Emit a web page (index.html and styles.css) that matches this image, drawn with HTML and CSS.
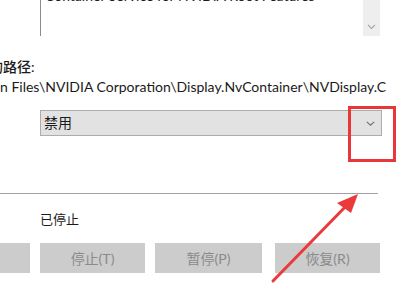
FILE: index.html
```html
<!DOCTYPE html>
<html>
<head>
<meta charset="utf-8">
<link rel="stylesheet" href="styles.css">
</head>
<body>
<div class="page">
  <div class="desc">
    <div class="desc-text">Container Service for NVIDIA Root Features</div>
    <div class="scrollbar">
      <svg class="sb-chev" width="9" height="6" viewBox="0 0 9 6"><path d="M1 1 L4.5 4.5 L8 1" fill="none" stroke="#a8a8a8" stroke-width="1.2"/></svg>
    </div>
  </div>
  <div class="label">的路径:</div>
  <div class="path">n Files\NVIDIA Corporation\Display.NvContainer\NVDisplay.Container.exe</div>
  <div class="combo">
    <span class="combo-text">禁用</span>
    <svg class="combo-chev" width="9" height="5" viewBox="0 0 9 5"><path d="M0.8 0.8 L4.5 4.2 L8.2 0.8" fill="none" stroke="#707070" stroke-width="1.1"/></svg>
  </div>
  <div class="sep"></div>
  <div class="status">已停止</div>
  <div class="buttons">
    <div class="btn">启动(S)</div>
    <div class="btn">停止(T)</div>
    <div class="btn btn-wide">暂停(P)</div>
    <div class="btn btn-last">恢复(R)</div>
  </div>
  <div class="highlight"></div>
  <svg class="arrow" width="400" height="300" viewBox="0 0 400 300">
    <path d="M273 281 L349 203" stroke="#ea3a3a" stroke-width="3" stroke-linecap="round"/>
    <path d="M358 194 L337 203 L351 213 Z" fill="#ea3a3a"/>
  </svg>
</div>
</body>
</html>
```

FILE: styles.css
```css
html, body {
  margin: 0;
  padding: 0;
  background: #ffffff;
  overflow: hidden;
}
body {
  width: 400px;
  height: 300px;
  font-family: "Lato", "Noto Sans CJK SC", sans-serif;
  color: #1a1a1a;
}
.page {
  position: relative;
  width: 400px;
  height: 300px;
}
.desc {
  display: flex;
  margin-left: 40px;
  width: 340px;
  height: 36px;
  border-left: 1px solid #8c8c8c;
  box-sizing: border-box;
}
.desc-text {
  flex: 1;
  font-size: 14px;
  line-height: 14px;
  margin-top: -11px;
  padding-left: 4px;
  white-space: nowrap;
  overflow: hidden;
}
.scrollbar {
  width: 17px;
  background: #eeeeee;
  display: flex;
  align-items: flex-end;
  justify-content: center;
  padding-bottom: 6px;
  box-sizing: border-box;
}
.label {
  margin-top: 23px;
  margin-left: -11px;
  font-size: 14px;
  line-height: 16px;
  height: 16px;
  white-space: nowrap;
  font-weight: 500;
}
.path {
  margin-top: 3px;
  font-size: 14px;
  line-height: 18px;
  height: 18px;
  white-space: nowrap;
  width: 386px;
  overflow: hidden;
}
.combo {
  margin-top: 14px;
  margin-left: 40px;
  width: 342px;
  height: 26px;
  box-sizing: border-box;
  background: #e2e2e2;
  border: 1px solid #adadad;
  display: flex;
  align-items: center;
  justify-content: space-between;
  padding: 0 6px 0 3px;
}
.combo-text {
  font-size: 14px;
  line-height: 16px;
}
.sep {
  margin-top: 57px;
  width: 378px;
  height: 1px;
  background: #a0a0a0;
}
.status {
  margin-top: 18px;
  margin-left: 40px;
  font-size: 13px;
  line-height: 14px;
  height: 14px;
}
.buttons {
  display: flex;
  margin-top: 17px;
  margin-left: -75px;
  gap: 10px;
}
.btn {
  width: 105px;
  height: 30px;
  background: #cccccc;
  color: #8a8a8a;
  font-size: 14px;
  display: flex;
  align-items: center;
  justify-content: center;
}
.btn-wide {
  width: 107px;
}
.btn-last {
  margin-left: 3px;
}
.highlight {
  position: absolute;
  left: 348px;
  top: 106px;
  width: 48px;
  height: 56px;
  box-sizing: border-box;
  border: 3px solid #e8373a;
}
.arrow {
  position: absolute;
  left: 0;
  top: 0;
}
```
